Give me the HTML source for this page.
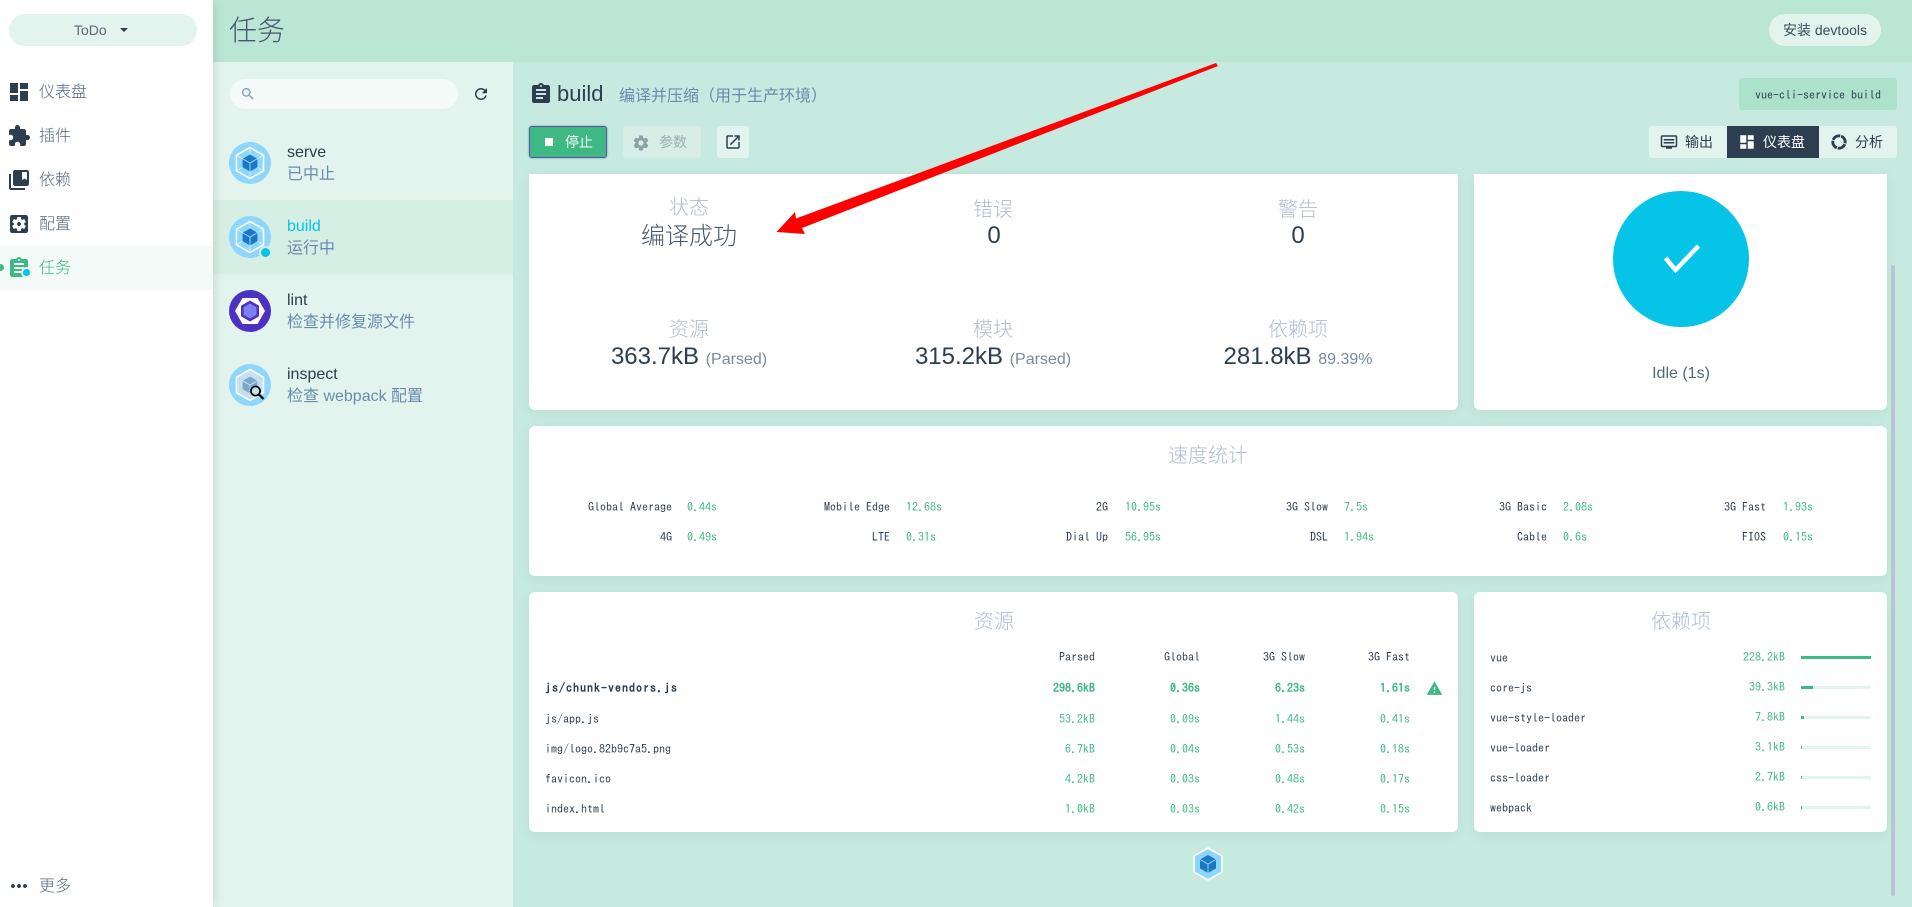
<!DOCTYPE html>
<html><head><meta charset="utf-8"><title>任务</title>
<style>
*{box-sizing:border-box;margin:0;padding:0}
html,body{width:1912px;height:907px;overflow:hidden;background:#c6eadf}
body{font-family:"Liberation Sans","Noto Sans CJK SC",sans-serif;color:#2c3e50;font-size:16px;position:relative}
.a{position:absolute;white-space:nowrap;line-height:20px;height:20px}
.b{position:absolute}
.c{text-align:center}
.r{text-align:right}
.sub{color:#6a8bad}
.lab{color:#adbdd2;font-size:20px;line-height:24px;height:24px;text-align:center;width:300px;font-weight:300}
.val{font-size:24px;line-height:30px;height:30px;text-align:center;width:300px;color:#2c3e50}
.val small{font-size:16px;color:#7a8a9a}
.m{font-family:"IPAGothic","Liberation Mono",monospace;font-size:12px;color:#2c3e50}
.g{color:#3eb983}
.tit{color:#adbdd2;font-size:20px;line-height:24px;height:24px;text-align:center;font-weight:300}
.card{position:absolute;background:#fff;border-radius:6px;box-shadow:0 3px 14px rgba(0,0,0,.06)}
svg{position:absolute;display:block}
.t{fill:#2c3e50}
.bar{position:absolute;left:1801px;width:70px;height:3px;background:#e2f4ed}
.bar i{display:block;height:3px;background:#3eb983}
.n{color:#55677a;font-weight:300}
</style></head><body>
<svg width="0" height="0" style="position:absolute"><defs>
<symbol id="wp" viewBox="0 0 42 42">
<circle cx="21" cy="21" r="21" fill="#8ed6fb"/>
<path d="M21 5.5 34.5 13.2V28.8L21 36.5 7.5 28.8V13.2Z" fill="none" stroke="#fff" stroke-width="1.6"/>
<path d="M21 5.5V12.5M34.5 13.2 28.4 16.75M34.5 28.8 28.4 25.25M21 36.5V29.5M7.5 28.8 13.6 25.25M7.5 13.2 13.6 16.75" stroke="#cfeefc" stroke-width="1"/>
<path d="M21 12.5 28.4 16.75V25.25L21 29.5 13.6 25.25V16.75Z" fill="#1c78c0"/>
<path d="M13.6 16.75 21 21 28.4 16.75M21 21V29.5" fill="none" stroke="#8ed6fb" stroke-width="1"/>
</symbol>
<symbol id="wpi" viewBox="0 0 42 42">
<circle cx="21" cy="21" r="21" fill="#8ed6fb"/>
<path d="M21 5.5 34.5 13.2V28.8L21 36.5 7.5 28.8V13.2Z" fill="#c4e1ef" stroke="#fff" stroke-width="1.6"/>
<path d="M21 12.5 28.4 16.75V25.25L21 29.5 13.6 25.25V16.75Z" fill="#7ba7cc"/>
<path d="M13.6 16.75 21 21 28.4 16.75M21 21V29.5" fill="none" stroke="#c4e1ef" stroke-width="1"/>
<circle cx="26.5" cy="27" r="4.6" fill="#c4e1ef" stroke="#000" stroke-width="1.7"/>
<path d="M30 30.5 34.5 35" stroke="#000" stroke-width="2.2"/>
</symbol>
</defs></svg>

<!-- sidebar -->
<div class="b" style="left:0;top:0;width:213px;height:907px;background:#fff;box-shadow:0 0 12px rgba(0,0,0,.14);z-index:3">
<div class="b" style="left:9px;top:14px;width:188px;height:32px;border-radius:16px;background:#e2f4ed"></div>
<div class="a" style="left:74px;top:20px;font-size:14px;color:#5b6a78">ToDo</div>
<div class="b" style="left:120px;top:28px;width:0;height:0;border:4px solid transparent;border-top:4px solid #2c3e50;border-bottom:0"></div>
<div class="b" style="left:0;top:246px;width:213px;height:44px;background:#f3faf7"></div>
<div class="b" style="left:-3px;top:264px;width:7px;height:7px;border-radius:50%;background:#3eb983"></div>
<svg style="left:7px;top:80px" width="24" height="24" viewBox="0 0 24 24"><path class="t" d="M3 13h8V3H3v10zm0 8h8v-6H3v6zm10 0h8V11h-8v10zm0-18v6h8V3h-8z"/></svg>
<svg style="left:7px;top:124px" width="24" height="24" viewBox="0 0 24 24"><path class="t" d="M20.5 11H19V7c0-1.1-.9-2-2-2h-4V3.5C13 2.12 11.88 1 10.5 1S8 2.12 8 3.5V5H4c-1.1 0-1.99.9-1.99 2v3.8H3.5c1.49 0 2.7 1.21 2.7 2.7s-1.21 2.7-2.7 2.7H2V20c0 1.1.9 2 2 2h3.8v-1.5c0-1.49 1.21-2.7 2.7-2.7 1.49 0 2.7 1.21 2.7 2.7V22H17c1.1 0 2-.9 2-2v-4h1.5c1.38 0 2.5-1.12 2.5-2.5S21.88 11 20.5 11z"/></svg>
<svg style="left:7px;top:168px" width="24" height="24" viewBox="0 0 24 24"><path class="t" d="M4 6H2v14c0 1.1.9 2 2 2h14v-2H4V6zm16-4H8c-1.1 0-2 .9-2 2v12c0 1.1.9 2 2 2h12c1.1 0 2-.9 2-2V4c0-1.1-.9-2-2-2zm0 10l-2.5-1.5L15 12V4h5v8z"/></svg>
<svg style="left:7px;top:212px" width="24" height="24" viewBox="0 0 24 24"><path class="t" d="M12 10c-1.1 0-2 .9-2 2s.9 2 2 2 2-.9 2-2-.9-2-2-2zm7-7H5c-1.11 0-2 .9-2 2v14c0 1.1.89 2 2 2h14c1.11 0 2-.9 2-2V5c0-1.1-.89-2-2-2zm-1.75 9c0 .23-.02.46-.05.68l1.48 1.16c.13.11.17.3.08.45l-1.4 2.42c-.09.15-.27.21-.43.15l-1.74-.7c-.36.28-.76.51-1.18.69l-.26 1.85c-.03.17-.18.3-.35.3h-2.8c-.17 0-.32-.13-.35-.29l-.26-1.85c-.43-.18-.82-.41-1.18-.69l-1.74.7c-.16.06-.34 0-.43-.15l-1.4-2.42c-.09-.15-.05-.34.08-.45l1.48-1.16c-.03-.23-.05-.46-.05-.69 0-.23.02-.46.05-.68l-1.48-1.16c-.13-.11-.17-.3-.08-.45l1.4-2.42c.09-.15.27-.21.43-.15l1.74.7c.36-.28.76-.51 1.18-.69l.26-1.85c.03-.17.18-.3.35-.3h2.8c.17 0 .32.13.35.29l.26 1.85c.43.18.82.41 1.18.69l1.74-.7c.16-.06.34 0 .43.15l1.4 2.42c.09.15.05.34-.08.45l-1.48 1.16c.03.23.05.46.05.69z"/></svg>
<svg style="left:7px;top:256px" width="24" height="24" viewBox="0 0 24 24"><path fill="#3eb983" d="M19 3h-4.18C14.4 1.84 13.3 1 12 1c-1.3 0-2.4.84-2.82 2H5c-1.1 0-2 .9-2 2v14c0 1.1.9 2 2 2h14c1.1 0 2-.9 2-2V5c0-1.1-.9-2-2-2zm-7 0c.55 0 1 .45 1 1s-.45 1-1 1-1-.45-1-1 .45-1 1-1zm2 14H7v-2h7v2zm3-4H7v-2h10v2zm0-4H7V7h10v2z"/></svg>
<div class="b" style="left:21px;top:267px;width:11px;height:11px;border-radius:50%;background:#05c4e8;border:2px solid #e2f4ed"></div>
<div class="a n" style="left:39px;top:83px">仪表盘</div>
<div class="a n" style="left:39px;top:127px">插件</div>
<div class="a n" style="left:39px;top:171px">依赖</div>
<div class="a n" style="left:39px;top:215px">配置</div>
<div class="a g" style="left:39px;top:259px;font-weight:300">任务</div>
<svg style="left:7px;top:874px" width="24" height="24" viewBox="0 0 24 24"><path class="t" d="M6 10c-1.1 0-2 .9-2 2s.9 2 2 2 2-.9 2-2-.9-2-2-2zm12 0c-1.1 0-2 .9-2 2s.9 2 2 2 2-.9 2-2-.9-2-2-2zm-6 0c-1.1 0-2 .9-2 2s.9 2 2 2 2-.9 2-2-.9-2-2-2z"/></svg>
<div class="a n" style="left:39px;top:877px">更多</div>
</div>

<!-- header -->
<div class="b" style="left:213px;top:0;width:1699px;height:62px;background:#bbe6d6"></div>
<div class="a" style="left:229px;top:11px;height:40px;line-height:40px;font-size:28px;color:#44566a;font-weight:300">任务</div>
<div class="b" style="left:1769px;top:14px;width:112px;height:32px;border-radius:16px;background:#e2f4ed"></div>
<div class="a c" style="left:1769px;top:20px;width:112px;font-size:14px;color:#3a4d5f">安装 devtools</div>

<!-- left panel -->
<div class="b" style="left:213px;top:62px;width:300px;height:845px;background:#e2f4ed"></div>
<div class="b" style="left:230px;top:79px;width:228px;height:30px;border-radius:15px;background:#f4fbf8"></div>
<svg style="left:240px;top:86px" width="16" height="16" viewBox="0 0 24 24"><path fill="#7f9cb5" d="M15.5 14h-.79l-.28-.27C15.41 12.59 16 11.11 16 9.5 16 5.91 13.09 3 9.5 3S3 5.91 3 9.5 5.91 16 9.5 16c1.61 0 3.09-.59 4.23-1.57l.27.28v.79l5 4.99L20.49 19l-4.99-5zm-6 0C7.01 14 5 11.99 5 9.5S7.01 5 9.5 5 14 7.01 14 9.5 11.99 14 9.5 14z"/></svg>
<svg style="left:472px;top:85px" width="18" height="18" viewBox="0 0 24 24"><path class="t" d="M17.65 6.35C16.2 4.9 14.21 4 12 4c-4.42 0-7.99 3.58-7.99 8s3.57 8 7.99 8c3.73 0 6.84-2.55 7.73-6h-2.08c-.82 2.33-3.04 4-5.65 4-3.31 0-6-2.69-6-6s2.69-6 6-6c1.66 0 3.14.69 4.22 1.78L13 11h7V4l-2.35 2.35z"/></svg>
<div class="b" style="left:213px;top:200px;width:300px;height:74px;background:#d6efe5"></div>
<svg style="left:229px;top:142px" width="42" height="42"><use href="#wp"/></svg>
<svg style="left:229px;top:216px" width="42" height="42"><use href="#wp"/></svg>
<div class="b" style="left:259px;top:246px;width:13px;height:13px;border-radius:50%;background:#05c4e8;border:2px solid #d6efe5"></div>
<svg style="left:229px;top:290px" width="42" height="42" viewBox="0 0 42 42"><circle cx="21" cy="21" r="21" fill="#4b32c3"/><path d="M6 21 13.5 8H28.5L36 21 28.5 34H13.5Z" fill="#fff"/><path d="M21 10.5 30 15.7V26.3L21 31.5 12 26.3V15.7Z" fill="#4b32c3"/><path d="M21 13.5 27.5 17.2V24.8L21 28.5 14.5 24.8V17.2Z" fill="#8080f2"/></svg>
<svg style="left:229px;top:364px" width="42" height="42"><use href="#wpi"/></svg>
<div class="a" style="left:287px;top:143px;color:#2c3e50">serve</div>
<div class="a sub" style="left:287px;top:165px">已中止</div>
<div class="a" style="left:287px;top:217px;color:#05c4e8">build</div>
<div class="a sub" style="left:287px;top:239px">运行中</div>
<div class="a" style="left:287px;top:291px">lint</div>
<div class="a sub" style="left:287px;top:313px">检查并修复源文件</div>
<div class="a" style="left:287px;top:365px">inspect</div>
<div class="a sub" style="left:287px;top:387px">检查 webpack 配置</div>

<!-- main top -->
<svg style="left:529px;top:82px" width="24" height="24" viewBox="0 0 24 24"><path class="t" d="M19 3h-4.18C14.4 1.84 13.3 1 12 1c-1.3 0-2.4.84-2.82 2H5c-1.1 0-2 .9-2 2v14c0 1.1.9 2 2 2h14c1.1 0 2-.9 2-2V5c0-1.1-.9-2-2-2zm-7 0c.55 0 1 .45 1 1s-.45 1-1 1-1-.45-1-1 .45-1 1-1zm2 14H7v-2h7v2zm3-4H7v-2h10v2zm0-4H7V7h10v2z"/></svg>
<div class="a" style="left:557px;top:79px;height:30px;line-height:30px;font-size:22px">build</div>
<div class="a sub" style="left:619px;top:87px">编译并压缩（用于生产环境）</div>
<div class="b" style="left:1739px;top:78px;width:158px;height:32px;border-radius:3px;background:#ace1cc"></div>
<div class="a m" style="left:1755px;top:85px">vue-cli-service build</div>

<div class="b" style="left:529px;top:126px;width:78px;height:32px;border-radius:3px;background:#3eb983;border:1px solid #5a50ad;box-shadow:0 0 2px rgba(90,80,173,.6)"></div>
<div class="b" style="left:545px;top:138px;width:8px;height:8px;background:#fff"></div>
<div class="a" style="left:565px;top:132px;font-size:14px;color:#fff">停止</div>
<div class="b" style="left:623px;top:126px;width:78px;height:32px;border-radius:3px;background:#d6eee6"></div>
<svg style="left:632px;top:134px" width="18" height="18" viewBox="0 0 24 24"><path fill="#8aa3a3" d="M19.43 12.98c.04-.32.07-.64.07-.98s-.03-.66-.07-.98l2.11-1.65c.19-.15.24-.42.12-.64l-2-3.46c-.12-.22-.39-.3-.61-.22l-2.49 1c-.52-.4-1.08-.73-1.69-.98l-.38-2.65C14.46 2.18 14.25 2 14 2h-4c-.25 0-.46.18-.49.42l-.38 2.65c-.61.25-1.17.59-1.69.98l-2.49-1c-.23-.09-.49 0-.61.22l-2 3.46c-.13.22-.07.49.12.64l2.11 1.65c-.04.32-.07.65-.07.98s.03.66.07.98l-2.11 1.65c-.19.15-.24.42-.12.64l2 3.46c.12.22.39.3.61.22l2.49-1c.52.4 1.08.73 1.69.98l.38 2.65c.03.24.24.42.49.42h4c.25 0 .46-.18.49-.42l.38-2.65c.61-.25 1.17-.59 1.69-.98l2.49 1c.23.09.49 0 .61-.22l2-3.46c.12-.22.07-.49-.12-.64l-2.11-1.65zM12 15.5c-1.93 0-3.5-1.57-3.5-3.5s1.57-3.5 3.5-3.5 3.5 1.57 3.5 3.5-1.57 3.5-3.5 3.5z"/></svg>
<div class="a" style="left:659px;top:132px;font-size:14px;color:#9bb0b0">参数</div>
<div class="b" style="left:717px;top:126px;width:32px;height:32px;border-radius:3px;background:#e2f4ed"></div>
<svg style="left:724px;top:133px" width="18" height="18" viewBox="0 0 24 24"><path class="t" d="M19 19H5V5h7V3H5c-1.11 0-2 .9-2 2v14c0 1.1.89 2 2 2h14c1.1 0 2-.9 2-2v-7h-2v7zM14 3v2h3.59l-9.83 9.83 1.41 1.41L19 6.41V10h2V3h-7z"/></svg>

<div class="b" style="left:1649px;top:126px;width:248px;height:32px;border-radius:3px;background:#e2f4ed"></div>
<div class="b" style="left:1727px;top:126px;width:92px;height:32px;background:#2c3e50"></div>
<svg style="left:1660px;top:133px" width="18" height="18" viewBox="0 0 24 24"><path class="t" d="M21 3H3c-1.1 0-2 .9-2 2v12c0 1.1.9 2 2 2h5v2h8v-2h5c1.1 0 2-.9 2-2V5c0-1.1-.9-2-2-2zm0 14H3V5h18v12zM5 8h14v2H5zm0 4h14v2H5z"/></svg>
<div class="a" style="left:1685px;top:132px;font-size:14px;color:#2c3e50">输出</div>
<svg style="left:1738px;top:133px" width="18" height="18" viewBox="0 0 24 24"><path fill="#fff" d="M3 13h8V3H3v10zm0 8h8v-6H3v6zm10 0h8V11h-8v10zm0-18v6h8V3h-8z"/></svg>
<div class="a" style="left:1763px;top:132px;font-size:14px;color:#fff">仪表盘</div>
<svg style="left:1830px;top:133px" width="18" height="18" viewBox="0 0 18 18"><circle cx="9" cy="9" r="6.2" fill="none" stroke="#2c3e50" stroke-width="2.8" stroke-dasharray="8.7 1" transform="rotate(20 9 9)"/></svg>
<div class="a" style="left:1855px;top:132px;font-size:14px;color:#2c3e50">分析</div>

<!-- cards -->
<div class="card" style="left:529px;top:174px;width:929px;height:236px;border-radius:0 0 6px 6px"></div>
<div class="card" style="left:1474px;top:174px;width:413px;height:236px;border-radius:0 0 6px 6px"></div>
<div class="card" style="left:529px;top:426px;width:1358px;height:150px"></div>
<div class="card" style="left:529px;top:592px;width:929px;height:240px"></div>
<div class="card" style="left:1474px;top:592px;width:413px;height:240px"></div>
<div class="b" style="left:1891px;top:265px;width:4px;height:631px;border-radius:2px;background:#b3c6d1"></div>

<div class="a lab" style="left:539px;top:196px">状态</div>
<div class="a val" style="left:539px;top:222px;color:#46586a;font-weight:300">编译成功</div>
<div class="a lab" style="left:843px;top:198px">错误</div>
<div class="a val" style="left:844px;top:221px">0</div>
<div class="a lab" style="left:1148px;top:198px">警告</div>
<div class="a val" style="left:1148px;top:221px">0</div>
<div class="a lab" style="left:539px;top:318px">资源</div>
<div class="a val" style="left:539px;top:342px">363.7kB <small>(Parsed)</small></div>
<div class="a lab" style="left:843px;top:318px">模块</div>
<div class="a val" style="left:843px;top:342px">315.2kB <small>(Parsed)</small></div>
<div class="a lab" style="left:1148px;top:318px">依赖项</div>
<div class="a val" style="left:1148px;top:342px">281.8kB <small>89.39%</small></div>

<div class="b" style="left:1613px;top:191px;width:136px;height:136px;border-radius:50%;background:#05c4e8"></div>
<svg style="left:1660px;top:240px" width="42" height="38" viewBox="0 0 42 38"><path d="M5.5 18 15.5 30 38.5 6" fill="none" stroke="#fff" stroke-width="4.5"/></svg>
<div class="a c" style="left:1574px;top:364px;width:214px;color:#55677a">Idle (1s)</div>

<!-- speed -->
<div class="a tit" style="left:1058px;top:444px;width:300px">速度统计</div>
<div class="a m r" style="left:472px;top:497px;width:200px">Global Average</div><div class="a m g" style="left:687px;top:497px">0.44s</div>
<div class="a m r" style="left:690px;top:497px;width:200px">Mobile Edge</div><div class="a m g" style="left:906px;top:497px">12.68s</div>
<div class="a m r" style="left:908px;top:497px;width:200px">2G</div><div class="a m g" style="left:1125px;top:497px">10.95s</div>
<div class="a m r" style="left:1128px;top:497px;width:200px">3G Slow</div><div class="a m g" style="left:1344px;top:497px">7.5s</div>
<div class="a m r" style="left:1347px;top:497px;width:200px">3G Basic</div><div class="a m g" style="left:1563px;top:497px">2.08s</div>
<div class="a m r" style="left:1566px;top:497px;width:200px">3G Fast</div><div class="a m g" style="left:1783px;top:497px">1.93s</div>
<div class="a m r" style="left:472px;top:527px;width:200px">4G</div><div class="a m g" style="left:687px;top:527px">0.49s</div>
<div class="a m r" style="left:690px;top:527px;width:200px">LTE</div><div class="a m g" style="left:906px;top:527px">0.31s</div>
<div class="a m r" style="left:908px;top:527px;width:200px">Dial Up</div><div class="a m g" style="left:1125px;top:527px">56.95s</div>
<div class="a m r" style="left:1128px;top:527px;width:200px">DSL</div><div class="a m g" style="left:1344px;top:527px">1.94s</div>
<div class="a m r" style="left:1347px;top:527px;width:200px">Cable</div><div class="a m g" style="left:1563px;top:527px">0.6s</div>
<div class="a m r" style="left:1566px;top:527px;width:200px">FIOS</div><div class="a m g" style="left:1783px;top:527px">0.15s</div>

<!-- assets -->
<div class="a tit" style="left:844px;top:610px;width:300px">资源</div>
<div class="a m r" style="left:995px;top:647px;width:100px">Parsed</div>
<div class="a m r" style="left:1100px;top:647px;width:100px">Global</div>
<div class="a m r" style="left:1205px;top:647px;width:100px">3G Slow</div>
<div class="a m r" style="left:1310px;top:647px;width:100px">3G Fast</div>

<div class="a m" style="left:545px;top:678px;font-weight:700;letter-spacing:1px">js/chunk-vendors.js</div>
<div class="a m g r" style="left:995px;top:678px;width:100px;font-weight:700">298.6kB</div>
<div class="a m g r" style="left:1100px;top:678px;width:100px;font-weight:700">0.36s</div>
<div class="a m g r" style="left:1205px;top:678px;width:100px;font-weight:700">6.23s</div>
<div class="a m g r" style="left:1310px;top:678px;width:100px;font-weight:700">1.61s</div>
<svg style="left:1426px;top:680px" width="17" height="17" viewBox="0 0 24 24"><path fill="#3eb983" d="M1 21h22L12 2 1 21zm12-3h-2v-2h2v2zm0-4h-2v-4h2v4z"/></svg>

<div class="a m" style="left:545px;top:709px">js/app.js</div>
<div class="a m g r" style="left:995px;top:709px;width:100px">53.2kB</div>
<div class="a m g r" style="left:1100px;top:709px;width:100px">0.09s</div>
<div class="a m g r" style="left:1205px;top:709px;width:100px">1.44s</div>
<div class="a m g r" style="left:1310px;top:709px;width:100px">0.41s</div>

<div class="a m" style="left:545px;top:739px">img/logo.82b9c7a5.png</div>
<div class="a m g r" style="left:995px;top:739px;width:100px">6.7kB</div>
<div class="a m g r" style="left:1100px;top:739px;width:100px">0.04s</div>
<div class="a m g r" style="left:1205px;top:739px;width:100px">0.53s</div>
<div class="a m g r" style="left:1310px;top:739px;width:100px">0.18s</div>

<div class="a m" style="left:545px;top:769px">favicon.ico</div>
<div class="a m g r" style="left:995px;top:769px;width:100px">4.2kB</div>
<div class="a m g r" style="left:1100px;top:769px;width:100px">0.03s</div>
<div class="a m g r" style="left:1205px;top:769px;width:100px">0.48s</div>
<div class="a m g r" style="left:1310px;top:769px;width:100px">0.17s</div>

<div class="a m" style="left:545px;top:799px">index.html</div>
<div class="a m g r" style="left:995px;top:799px;width:100px">1.0kB</div>
<div class="a m g r" style="left:1100px;top:799px;width:100px">0.03s</div>
<div class="a m g r" style="left:1205px;top:799px;width:100px">0.42s</div>
<div class="a m g r" style="left:1310px;top:799px;width:100px">0.15s</div>

<!-- deps -->
<div class="a tit" style="left:1531px;top:610px;width:300px">依赖项</div>
<div class="a m" style="left:1490px;top:648px">vue</div><div class="a m g r" style="left:1685px;top:647px;width:100px">228.2kB</div><div class="bar" style="top:656px"><i style="width:100%"></i></div>
<div class="a m" style="left:1490px;top:678px">core-js</div><div class="a m g r" style="left:1685px;top:677px;width:100px">39.3kB</div><div class="bar" style="top:686px"><i style="width:17%"></i></div>
<div class="a m" style="left:1490px;top:708px">vue-style-loader</div><div class="a m g r" style="left:1685px;top:707px;width:100px">7.8kB</div><div class="bar" style="top:716px"><i style="width:4%"></i></div>
<div class="a m" style="left:1490px;top:738px">vue-loader</div><div class="a m g r" style="left:1685px;top:737px;width:100px">3.1kB</div><div class="bar" style="top:746px"><i style="width:1.4%"></i></div>
<div class="a m" style="left:1490px;top:768px">css-loader</div><div class="a m g r" style="left:1685px;top:767px;width:100px">2.7kB</div><div class="bar" style="top:776px"><i style="width:1.4%"></i></div>
<div class="a m" style="left:1490px;top:798px">webpack</div><div class="a m g r" style="left:1685px;top:797px;width:100px">0.6kB</div><div class="bar" style="top:806px"><i style="width:1.4%"></i></div>

<!-- bottom webpack logo -->
<svg style="left:1192px;top:847px" width="32" height="34" viewBox="0 0 32 34"><path d="M16 1 30 9V25L16 33 2 25V9Z" fill="#8ed6fb" stroke="#fff" stroke-width="1.6"/><path d="M16 8 24 12.5V21.5L16 26 8 21.5V12.5Z" fill="#1c78c0"/><path d="M8 12.5 16 17 24 12.5M16 17V26" fill="none" stroke="#8ed6fb" stroke-width="1"/></svg>

<!-- arrow -->
<svg style="left:0;top:0;z-index:5" width="1912" height="907"><polygon points="776.5,232 795,212 796,218.5 1216,63 1218,66 802,228 805,234" fill="#ff0000"/></svg>
</body></html>
